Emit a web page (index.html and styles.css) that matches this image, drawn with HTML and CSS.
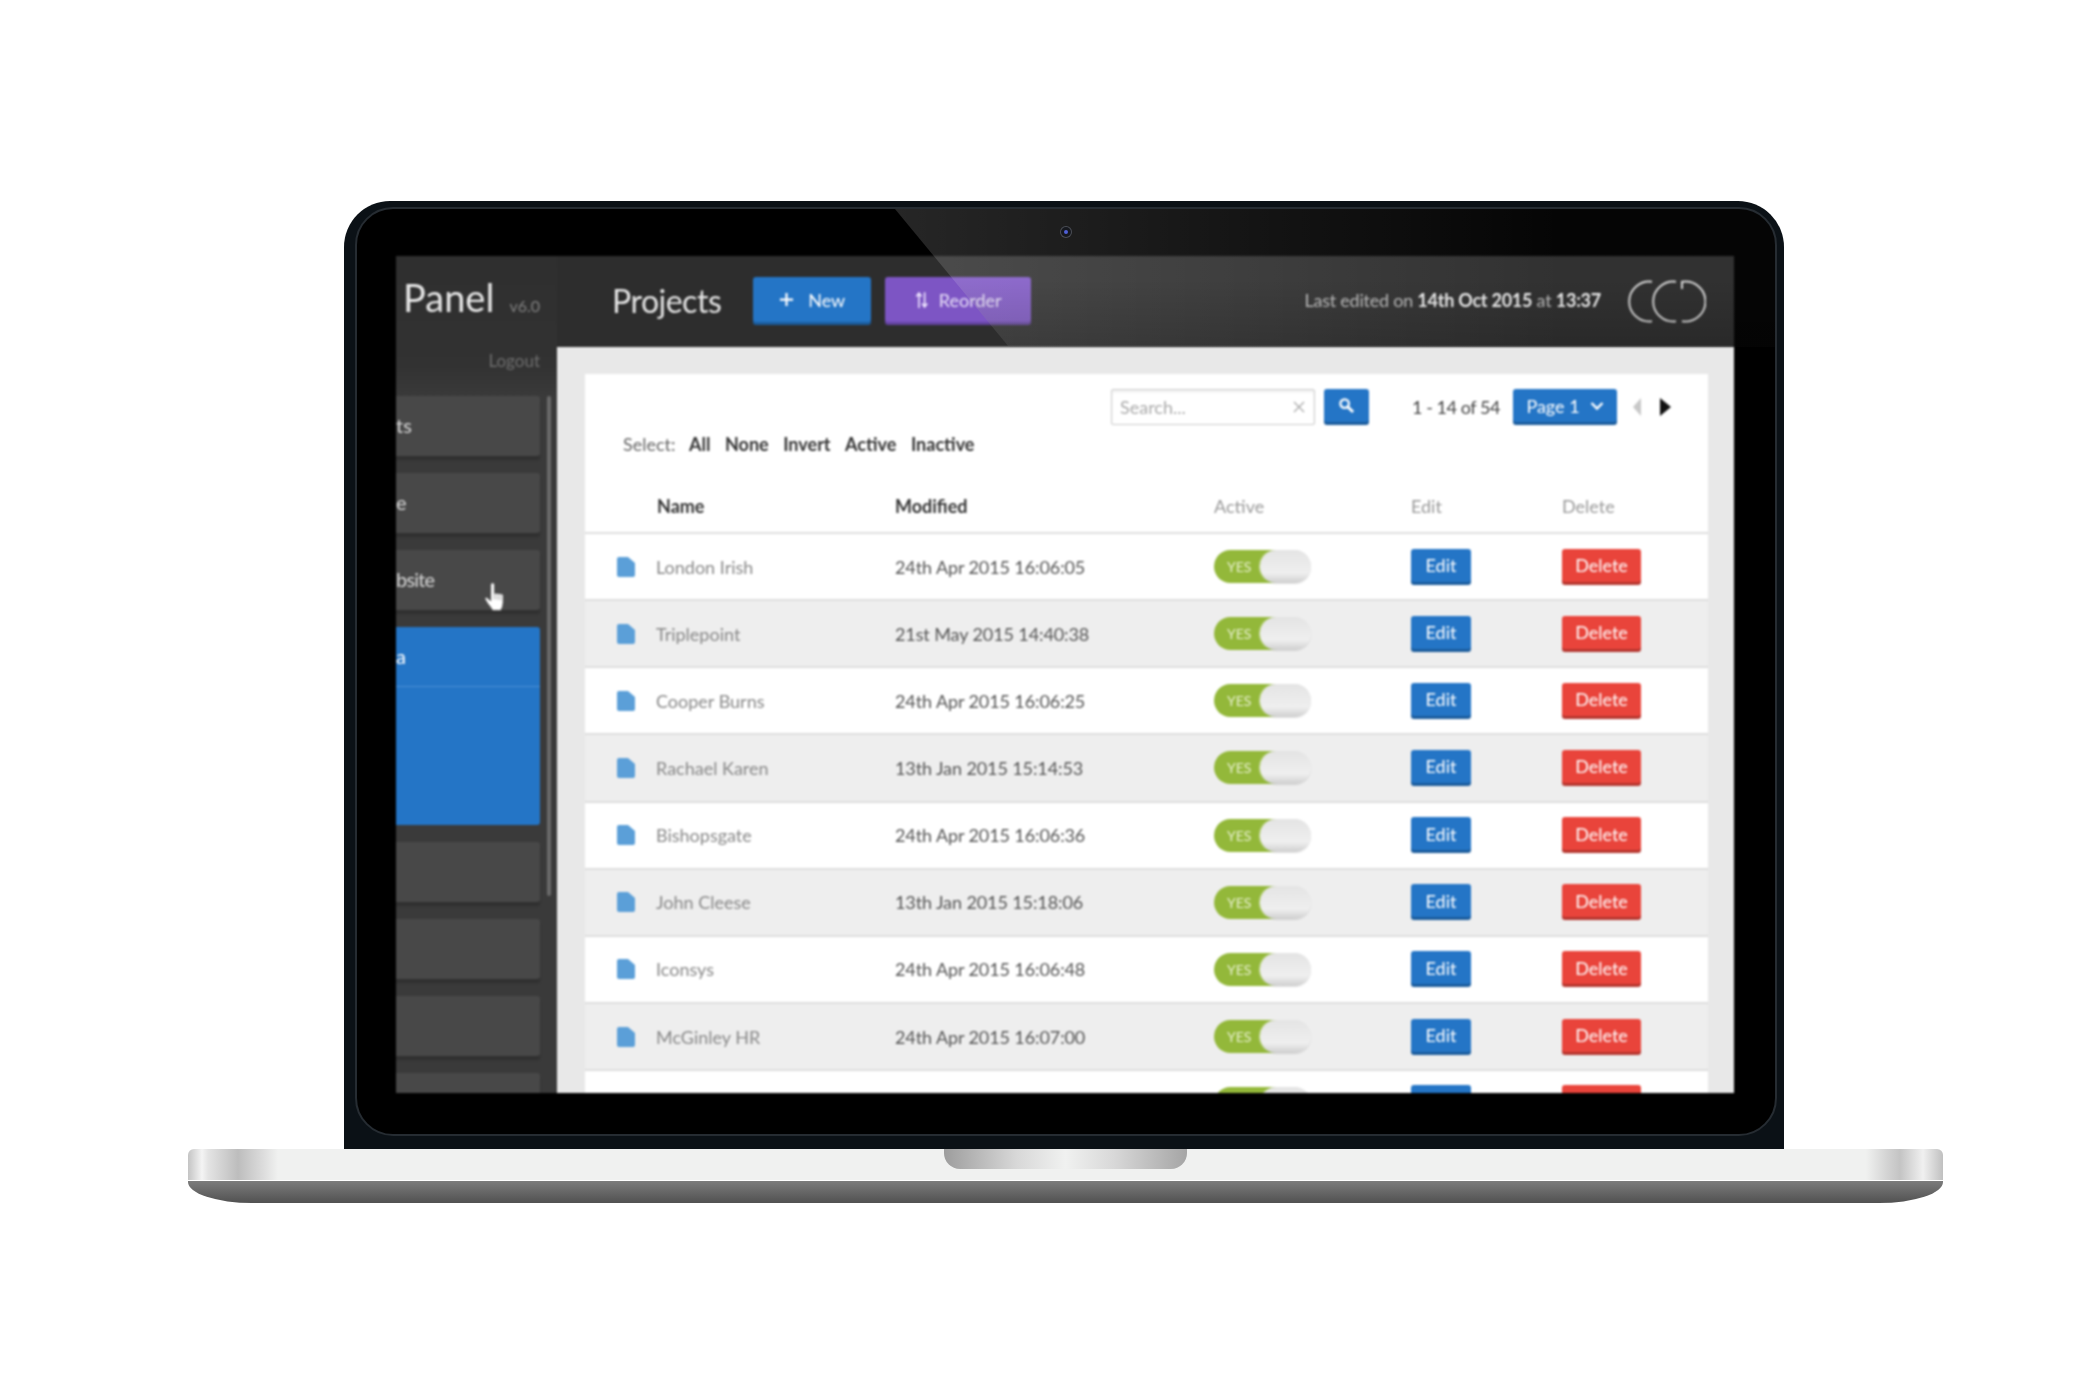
FILE: index.html
```html
<!DOCTYPE html>
<html lang="en">
<head>
    <meta charset="UTF-8">
    <meta name="viewport" content="width=device-width, initial-scale=1.0">
    <title>Projects</title>
    <link rel="stylesheet" href="styles.css">
</head>
<body>
    <div class="laptop">
        <div class="lid">
            <div class="bezel">
                <div class="screen">
                    <aside class="sidebar">
                        <div class="brand"><span class="brand-name">Panel</span><span class="brand-version">v6.0</span></div>
                        <div class="logout">Logout</div>
                        <nav class="nav">
                            <div class="nav-item">ts</div>
                            <div class="nav-item">e</div>
                            <div class="nav-item nav-tight">bsite</div>
                            <div class="nav-item nav-active">
                                <div class="nav-head">a</div>
                            </div>
                            <div class="nav-item"></div>
                            <div class="nav-item"></div>
                            <div class="nav-item"></div>
                            <div class="nav-item"></div>
                        </nav>
                        <div class="scrollbar"></div>
                        <svg class="cursor" viewBox="0 0 24 32" width="23" height="31">
                            <path d="M7 3q2-2.500 4 0v10q1.500-1.500 3 0 1.800-1 3 .5 2-1 3 1v8q0 4-2.500 8H9q-2-3.500-5-7l-3-5q-.5-2 2-1.500l4 3.500Z" fill="#fff" stroke="#444" stroke-width=".8"/>
                            <path d="M11 13v6M14 13.500v6M17 14v6" stroke="#888" stroke-width=".8"/>
                        </svg>
                    </aside>
                    <div class="main">
                        <header class="topbar">
                            <h1 class="page-title">Projects</h1>
                            <button class="btn btn-blue btn-top">
                                <svg viewBox="0 0 16 16" width="15" height="15"><path d="M8 1v14M1 8h14" stroke="#fff" stroke-width="2.400"/></svg>
                                New
                            </button>
                            <button class="btn btn-purple btn-top">
                                <svg viewBox="0 0 16 20" width="14" height="20"><path d="M4.500 19V3M1.500 6l3-4 3 4M11 1v16M8 14l3 4 3-4" fill="none" stroke="#f0e8ff" stroke-width="1.800"/></svg>
                                Reorder
                            </button>
                            <div class="edited">Last edited on <b>14th Oct 2015</b> at <b>13:37</b></div>
                            <svg class="logo" viewBox="0 0 78 43" width="78" height="43" fill="none" stroke="#d8d8d8" stroke-width="2">
                                <path d="M24 1.700A20 20 0 1 0 24 41.300"/>
                                <path d="M48 1.700A20 20 0 1 0 48 41.300"/>
                                <path d="M54 9V1.800A20 20 0 1 1 54 41.200"/>
                            </svg>
                        </header>
                        <div class="content">
                            <section class="card">
                                <div class="toolbar">
                                    <div class="search">
                                        <span>Search...</span>
                                        <svg viewBox="0 0 12 12" width="12" height="12"><path d="M1 1l10 10M11 1L1 11" stroke="#aaa" stroke-width="1.300"/></svg>
                                    </div>
                                    <button class="btn btn-blue btn-search">
                                        <svg viewBox="0 0 18 18" width="17" height="17"><circle cx="7" cy="7" r="4.500" fill="none" stroke="#fff" stroke-width="2.400"/><path d="M10.500 10.500l5.500 5.500" stroke="#fff" stroke-width="3"/></svg>
                                    </button>
                                    <span class="count">1 - 14 of 54</span>
                                    <button class="btn btn-blue btn-page">
                                        Page 1
                                        <svg viewBox="0 0 14 10" width="14" height="10"><path d="M1.500 2l5.500 5.500L12.500 2" fill="none" stroke="#fff" stroke-width="2.400"/></svg>
                                    </button>
                                    <span class="arrow arrow-prev"></span>
                                    <span class="arrow arrow-next"></span>
                                </div>
                                <div class="select-links">
                                    <span>Select:</span><b>All</b><b>None</b><b>Invert</b><b>Active</b><b>Inactive</b>
                                </div>
                                <div class="row row-head">
                                    <span></span>
                                    <b>Name</b>
                                    <b>Modified</b>
                                    <span>Active</span>
                                    <span>Edit</span>
                                    <span>Delete</span>
                                </div>
                                <div class="row">
                                    <svg class="doc" viewBox="0 0 18 20"><path d="M2 0h9l7 6v12q0 2-2 2H2q-2 0-2-2V2q0-2 2-2Z"/></svg>
                                    <span class="name">London Irish</span>
                                    <span class="date">24th Apr 2015 16:06:05</span>
                                    <div class="toggle"><span>YES</span><i></i></div>
                                    <div><button class="btn btn-blue btn-edit">Edit</button></div>
                                    <div><button class="btn btn-red btn-delete">Delete</button></div>
                                </div>
                                <div class="row">
                                    <svg class="doc" viewBox="0 0 18 20"><path d="M2 0h9l7 6v12q0 2-2 2H2q-2 0-2-2V2q0-2 2-2Z"/></svg>
                                    <span class="name">Triplepoint</span>
                                    <span class="date">21st May 2015 14:40:38</span>
                                    <div class="toggle"><span>YES</span><i></i></div>
                                    <div><button class="btn btn-blue btn-edit">Edit</button></div>
                                    <div><button class="btn btn-red btn-delete">Delete</button></div>
                                </div>
                                <div class="row">
                                    <svg class="doc" viewBox="0 0 18 20"><path d="M2 0h9l7 6v12q0 2-2 2H2q-2 0-2-2V2q0-2 2-2Z"/></svg>
                                    <span class="name">Cooper Burns</span>
                                    <span class="date">24th Apr 2015 16:06:25</span>
                                    <div class="toggle"><span>YES</span><i></i></div>
                                    <div><button class="btn btn-blue btn-edit">Edit</button></div>
                                    <div><button class="btn btn-red btn-delete">Delete</button></div>
                                </div>
                                <div class="row">
                                    <svg class="doc" viewBox="0 0 18 20"><path d="M2 0h9l7 6v12q0 2-2 2H2q-2 0-2-2V2q0-2 2-2Z"/></svg>
                                    <span class="name">Rachael Karen</span>
                                    <span class="date">13th Jan 2015 15:14:53</span>
                                    <div class="toggle"><span>YES</span><i></i></div>
                                    <div><button class="btn btn-blue btn-edit">Edit</button></div>
                                    <div><button class="btn btn-red btn-delete">Delete</button></div>
                                </div>
                                <div class="row">
                                    <svg class="doc" viewBox="0 0 18 20"><path d="M2 0h9l7 6v12q0 2-2 2H2q-2 0-2-2V2q0-2 2-2Z"/></svg>
                                    <span class="name">Bishopsgate</span>
                                    <span class="date">24th Apr 2015 16:06:36</span>
                                    <div class="toggle"><span>YES</span><i></i></div>
                                    <div><button class="btn btn-blue btn-edit">Edit</button></div>
                                    <div><button class="btn btn-red btn-delete">Delete</button></div>
                                </div>
                                <div class="row">
                                    <svg class="doc" viewBox="0 0 18 20"><path d="M2 0h9l7 6v12q0 2-2 2H2q-2 0-2-2V2q0-2 2-2Z"/></svg>
                                    <span class="name">John Cleese</span>
                                    <span class="date">13th Jan 2015 15:18:06</span>
                                    <div class="toggle"><span>YES</span><i></i></div>
                                    <div><button class="btn btn-blue btn-edit">Edit</button></div>
                                    <div><button class="btn btn-red btn-delete">Delete</button></div>
                                </div>
                                <div class="row">
                                    <svg class="doc" viewBox="0 0 18 20"><path d="M2 0h9l7 6v12q0 2-2 2H2q-2 0-2-2V2q0-2 2-2Z"/></svg>
                                    <span class="name">Iconsys</span>
                                    <span class="date">24th Apr 2015 16:06:48</span>
                                    <div class="toggle"><span>YES</span><i></i></div>
                                    <div><button class="btn btn-blue btn-edit">Edit</button></div>
                                    <div><button class="btn btn-red btn-delete">Delete</button></div>
                                </div>
                                <div class="row">
                                    <svg class="doc" viewBox="0 0 18 20"><path d="M2 0h9l7 6v12q0 2-2 2H2q-2 0-2-2V2q0-2 2-2Z"/></svg>
                                    <span class="name">McGinley HR</span>
                                    <span class="date">24th Apr 2015 16:07:00</span>
                                    <div class="toggle"><span>YES</span><i></i></div>
                                    <div><button class="btn btn-blue btn-edit">Edit</button></div>
                                    <div><button class="btn btn-red btn-delete">Delete</button></div>
                                </div>
                                <div class="row">
                                    <svg class="doc" viewBox="0 0 18 20"><path d="M2 0h9l7 6v12q0 2-2 2H2q-2 0-2-2V2q0-2 2-2Z"/></svg>
                                    <span></span>
                                    <span></span>
                                    <div class="toggle"><i></i></div>
                                    <div><button class="btn btn-blue btn-edit"></button></div>
                                    <div><button class="btn btn-red btn-delete"></button></div>
                                </div>
                            </section>
                        </div>
                    </div>
                </div>
                <div class="glare"></div>
                <div class="camera"></div>
            </div>
        </div>
        <div class="base">
            <div class="deck"><div class="notch"></div></div>
            <div class="lip"></div>
        </div>
    </div>
</body>
</html>
```

FILE: styles.css
```css
* {
    box-sizing: border-box;
}
body {
    margin: 0;
    padding-top: 201px;
    background: #fff;
    font-family: 'Lato', 'Open Sans', sans-serif;
    font-size: 18px;
}
.laptop {
    width: 1755px;
    margin-left: 188px;
}
.lid {
    width: 1440px;
    height: 948px;
    margin-left: 156px;
    padding: 6px 7px 13px 11px;
    background: #0b1116;
    border-radius: 46px 46px 0 0;
}
.bezel {
    position: relative;
    height: 929px;
    padding: 47px 41px 41px 39px;
    background: #000;
    border: 2px solid #262c32;
    border-radius: 38px;
    overflow: hidden;
}
.screen {
    display: flex;
    height: 837px;
    background: #393939;
    overflow: hidden;
    filter: blur(0.8px);
}
.glare {
    position: absolute;
    inset: 0;
    background:
        linear-gradient(rgba(0, 0, 0, 0) 50%, rgba(0, 0, 0, 0.16) 100%) 0 0 / 100% 139px no-repeat,
        linear-gradient(90deg, rgba(255, 255, 255, 0.15) 38%, rgba(255, 255, 255, 0.02) 85%);
    clip-path: polygon(538px 0, 100% 0, 100% 138px, 652px 138px);
    pointer-events: none;
}
.camera {
    position: absolute;
    top: 18px;
    left: 704px;
    width: 10px;
    height: 10px;
    background: #5060d8;
    border: 3px solid #16181e;
    border-radius: 50%;
    box-shadow: 0 0 0 1px #4a4d55;
}

/* sidebar */
.sidebar {
    position: relative;
    flex: 0 0 161px;
    padding-right: 17px;
    background: linear-gradient(#2f2f2f 0, #323232 110px, #3a3a3a 140px);
    overflow: hidden;
}
.brand {
    display: flex;
    align-items: baseline;
    justify-content: flex-end;
    gap: 15px;
    padding-top: 18px;
    height: 88px;
}
.brand-name {
    font-size: 38px;
    font-weight: 400;
    color: #e6e6e6;
}
.brand-version {
    font-size: 16px;
    color: #808080;
}
.logout {
    margin-top: 6px;
    height: 46px;
    text-align: right;
    font-size: 17px;
    color: #6e6e6e;
}
.nav {
    display: flex;
    flex-direction: column;
    gap: 17px;
}
.nav-item {
    height: 60px;
    line-height: 58px;
    font-size: 20px;
    color: #d8d8d8;
    background: #484848;
    border-radius: 0 3px 3px 0;
    box-shadow: 0 4px 2px #303030;
    flex: none;
}
.nav-tight {
    letter-spacing: -0.8px;
}
.nav-active {
    height: 198px;
    color: #fff;
    background: #2475c6;
    box-shadow: none;
}
.nav-head {
    height: 60px;
    border-bottom: 1px solid #4a8fd6;
}
.scrollbar {
    position: absolute;
    top: 140px;
    left: 151px;
    width: 4px;
    height: 500px;
    background: #6a6a6a;
    border-radius: 2px;
}
.cursor {
    position: absolute;
    top: 325px;
    left: 88px;
}

/* top bar */
.main {
    flex: 1;
    min-width: 0;
    display: flex;
    flex-direction: column;
}
.topbar {
    display: flex;
    align-items: center;
    flex: 0 0 91px;
    padding: 0 28px 0 55px;
    background: #2d2d2d;
}
.page-title {
    margin: -2px 32px 0 0;
    font-size: 32px;
    font-weight: 400;
    letter-spacing: -0.5px;
    color: #e4e4e4;
}
.edited {
    margin: -3px 27px 0 auto;
    letter-spacing: -0.24px;
    color: #bdbdbd;
}
.edited b {
    color: #f2f2f2;
}
.btn {
    display: inline-flex;
    align-items: center;
    justify-content: center;
    padding: 0;
    border: none;
    border-radius: 3px;
    font-family: inherit;
    font-size: 18px;
    color: #fff;
    cursor: pointer;
}
.btn-blue {
    background: #2475c6;
    box-shadow: 0 3px 0 #1b5c9c;
}
.btn-purple {
    background: #7d55c4;
    box-shadow: 0 3px 0 #6443a0;
}
.btn-red {
    background: #e9443b;
    box-shadow: 0 3px 0 #b5362f;
}
.btn-top {
    gap: 14px;
    width: 118px;
    height: 45px;
    margin-top: -4px;
}
.btn-purple.btn-top {
    width: 146px;
    margin-left: 14px;
    gap: 10px;
    color: #e8e0f8;
}

/* content */
.content {
    flex: 1;
    min-height: 0;
    padding: 27px 26px 0 28px;
    background: #e8e8e8;
}
.card {
    background: #fff;
}
.toolbar {
    display: flex;
    align-items: center;
    height: 51px;
    padding: 15px 0 0 526px;
}
.search {
    display: flex;
    align-items: center;
    justify-content: space-between;
    width: 204px;
    height: 36px;
    padding: 0 9px 0 8px;
    border: 1px solid #ccc;
    border-radius: 2px;
    box-shadow: inset 0 2px 3px #eee;
    color: #aaa;
}
.btn-search {
    width: 45px;
    height: 33px;
    margin: -3px 0 0 9px;
}
.count {
    margin-left: 43px;
    width: 101px;
    letter-spacing: -0.45px;
    color: #444;
}
.btn-page {
    gap: 10px;
    width: 104px;
    height: 33px;
    margin-top: -3px;
}
.arrow {
    width: 0;
    height: 0;
    border-top: 9px solid transparent;
    border-bottom: 9px solid transparent;
}
.arrow-prev {
    margin-left: 16px;
    border-right: 8px solid #c8c8c8;
}
.arrow-next {
    margin-left: 19px;
    border-left: 11px solid #111;
}
.select-links {
    display: flex;
    gap: 14.5px;
    height: 20px;
    margin: 9px 0 26px;
    padding-left: 38px;
    line-height: 20px;
    color: #666;
}
.select-links b {
    color: #333;
}
.select-links span {
    margin-right: -1px;
}

/* table rows */
.row {
    display: grid;
    grid-template-columns: 72px 238px 319px 197px 151px 1fr;
    align-items: center;
    height: 67.15px;
    border-bottom: 2px solid #dedede;
}
.row:nth-child(odd) {
    background: #eeeeee;
}
.row-head {
    height: 54px;
    color: #999;
}
.row.row-head {
    background: #fff;
}
.row-head b {
    color: #333;
}
.doc {
    width: 18px;
    height: 20px;
    margin-left: 32px;
    fill: #5b9fd8;
}
.name {
    margin-left: -1px;
    color: #888;
}
.date {
    letter-spacing: -0.1px;
    color: #555;
}
.toggle {
    position: relative;
    width: 97px;
    height: 33px;
    padding-left: 13px;
    line-height: 33px;
    font-size: 14px;
    color: #e8f0d0;
    background: linear-gradient(90deg, #93b83a 70%, #e8e8e8 70%);
    border-radius: 17px;
}
.toggle i {
    position: absolute;
    top: 0;
    right: 0;
    width: 51px;
    height: 33px;
    background: linear-gradient(#e4e4e4, #efefef 70%, #cfcfcf);
    border-radius: 17px;
    box-shadow: -1px 0 1px rgba(255, 255, 255, 0.5), 0 1px 1px rgba(0, 0, 0, 0.12);
}
.btn-edit {
    width: 60px;
    height: 33px;
    margin-bottom: 3px;
}
.btn-delete {
    width: 79px;
    height: 33px;
    margin-bottom: 3px;
}

/* base of the laptop */
.deck {
    display: flex;
    justify-content: center;
    height: 32px;
    background: linear-gradient(90deg, #c4c4c4 0, #f4f4f4 14px, #e4e4e4 20px, #bdbdbd 50px, #dcdcdc 75px, #f0f1f0 90px, #f0f1f0 1678px, #d2d2d2 1700px, #c4c4c4 1712px, #f0f0f0 1735px, #c0c0c0 100%);
    border-bottom: 1px solid #fff;
    border-radius: 6px 6px 0 0;
}
.notch {
    width: 243px;
    height: 20px;
    background: linear-gradient(90deg, #9d9d9d 0, #d8d8d8 30%, #f0f1f0 50%, #d8d8d8 70%, #a5a5a5 100%);
    border-radius: 0 0 16px 16px;
}
.lip {
    height: 22px;
    background: linear-gradient(#7c7c7c, #515151);
    border-radius: 0 0 64px 64px / 0 0 21px 21px;
}
```
